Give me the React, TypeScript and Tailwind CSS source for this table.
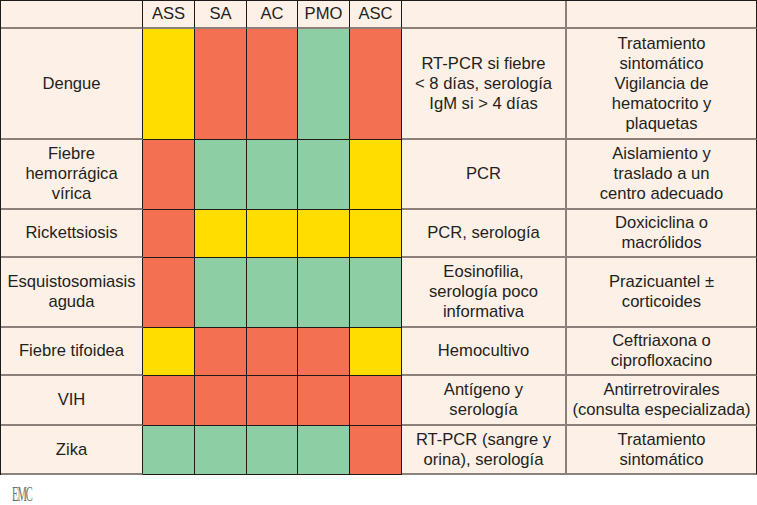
type Level = 'r' | 'y' | 'g';

type Row = {
  name: string;
  levels: Level[];
  diagnosis: string;
  treatment: string;
};

const HEADERS = ['ASS', 'SA', 'AC', 'PMO', 'ASC'];

const ROWS: Row[] = [
  {
    name: 'Dengue',
    levels: ['y', 'r', 'r', 'g', 'r'],
    diagnosis: 'RT-PCR si fiebre\n< 8 días, serología\nIgM si > 4 días',
    treatment: 'Tratamiento\nsintomático\nVigilancia de\nhematocrito y\nplaquetas',
  },
  {
    name: 'Fiebre\nhemorrágica\nvírica',
    levels: ['r', 'g', 'g', 'g', 'y'],
    diagnosis: 'PCR',
    treatment: 'Aislamiento y\ntraslado a un\ncentro adecuado',
  },
  {
    name: 'Rickettsiosis',
    levels: ['r', 'y', 'y', 'y', 'y'],
    diagnosis: 'PCR, serología',
    treatment: 'Doxiciclina o\nmacrólidos',
  },
  {
    name: 'Esquistosomiasis\naguda',
    levels: ['r', 'g', 'g', 'g', 'g'],
    diagnosis: 'Eosinofilia,\nserología poco\ninformativa',
    treatment: 'Prazicuantel ±\ncorticoides',
  },
  {
    name: 'Fiebre tifoidea',
    levels: ['y', 'r', 'r', 'r', 'y'],
    diagnosis: 'Hemocultivo',
    treatment: 'Ceftriaxona o\nciprofloxacino',
  },
  {
    name: 'VIH',
    levels: ['r', 'r', 'r', 'r', 'r'],
    diagnosis: 'Antígeno y\nserología',
    treatment: 'Antirretrovirales\n(consulta especializada)',
  },
  {
    name: 'Zika',
    levels: ['g', 'g', 'g', 'g', 'r'],
    diagnosis: 'RT-PCR (sangre y\norina), serología',
    treatment: 'Tratamiento\nsintomático',
  },
];

const LEVEL_BG: Record<Level, string> = {
  r: 'bg-[#f37053]',
  y: 'bg-[#ffdd00]',
  g: 'bg-[#8ecea5]',
};

// text cells: gray bottom rule; colour cells: black rules
const textCell =
  'flex items-center justify-center text-center whitespace-pre-line bg-[#fdf0e7] border-b-2 border-b-[#8b817a]';

export default function App() {
  return (
    <div className="w-[757px] h-[505px] bg-white font-['Liberation_Sans',Arial,sans-serif] text-[16.6px] leading-[20px] text-[#231f20]">
      <div className="grid grid-cols-[142px_52px_52px_51px_52px_52px_165px_190px] grid-rows-[28px_111px_70px_48px_70px_48px_50px_49px] border-t border-l border-[#1e1a17]">
        {/* header */}
        <div className={`${textCell} border-r border-r-[#1e1a17]`} />
        {HEADERS.map((h) => (
          <div key={h} className={`${textCell} border-r border-r-[#1e1a17]`}>
            {h}
          </div>
        ))}
        <div className={`${textCell} border-r-2 border-r-[#8b817a]`} />
        <div className={`${textCell} border-r border-r-[#1e1a17]`} />

        {ROWS.map((row) => (
          <Row key={row.name} row={row} />
        ))}
      </div>

      <div className="pl-[12px] pt-[10px]">
        <span className="inline-block origin-top-left scale-x-[0.5] font-['Liberation_Serif',serif] text-[21px] leading-[18px] tracking-[-2px] text-[#6e6e6e]">
          EMC
        </span>
      </div>
    </div>
  );
}

function Row({ row }: { row: Row }) {
  return (
    <>
      <div className={`${textCell} border-r border-r-[#1e1a17]`}>{row.name}</div>
      {row.levels.map((l, i) => (
        <div key={i} className={`${LEVEL_BG[l]} border-r border-b border-[#1e1a17]`} />
      ))}
      <div className={`${textCell} border-r-2 border-r-[#8b817a]`}>{row.diagnosis}</div>
      <div className={`${textCell} border-r border-r-[#1e1a17]`}>{row.treatment}</div>
    </>
  );
}
